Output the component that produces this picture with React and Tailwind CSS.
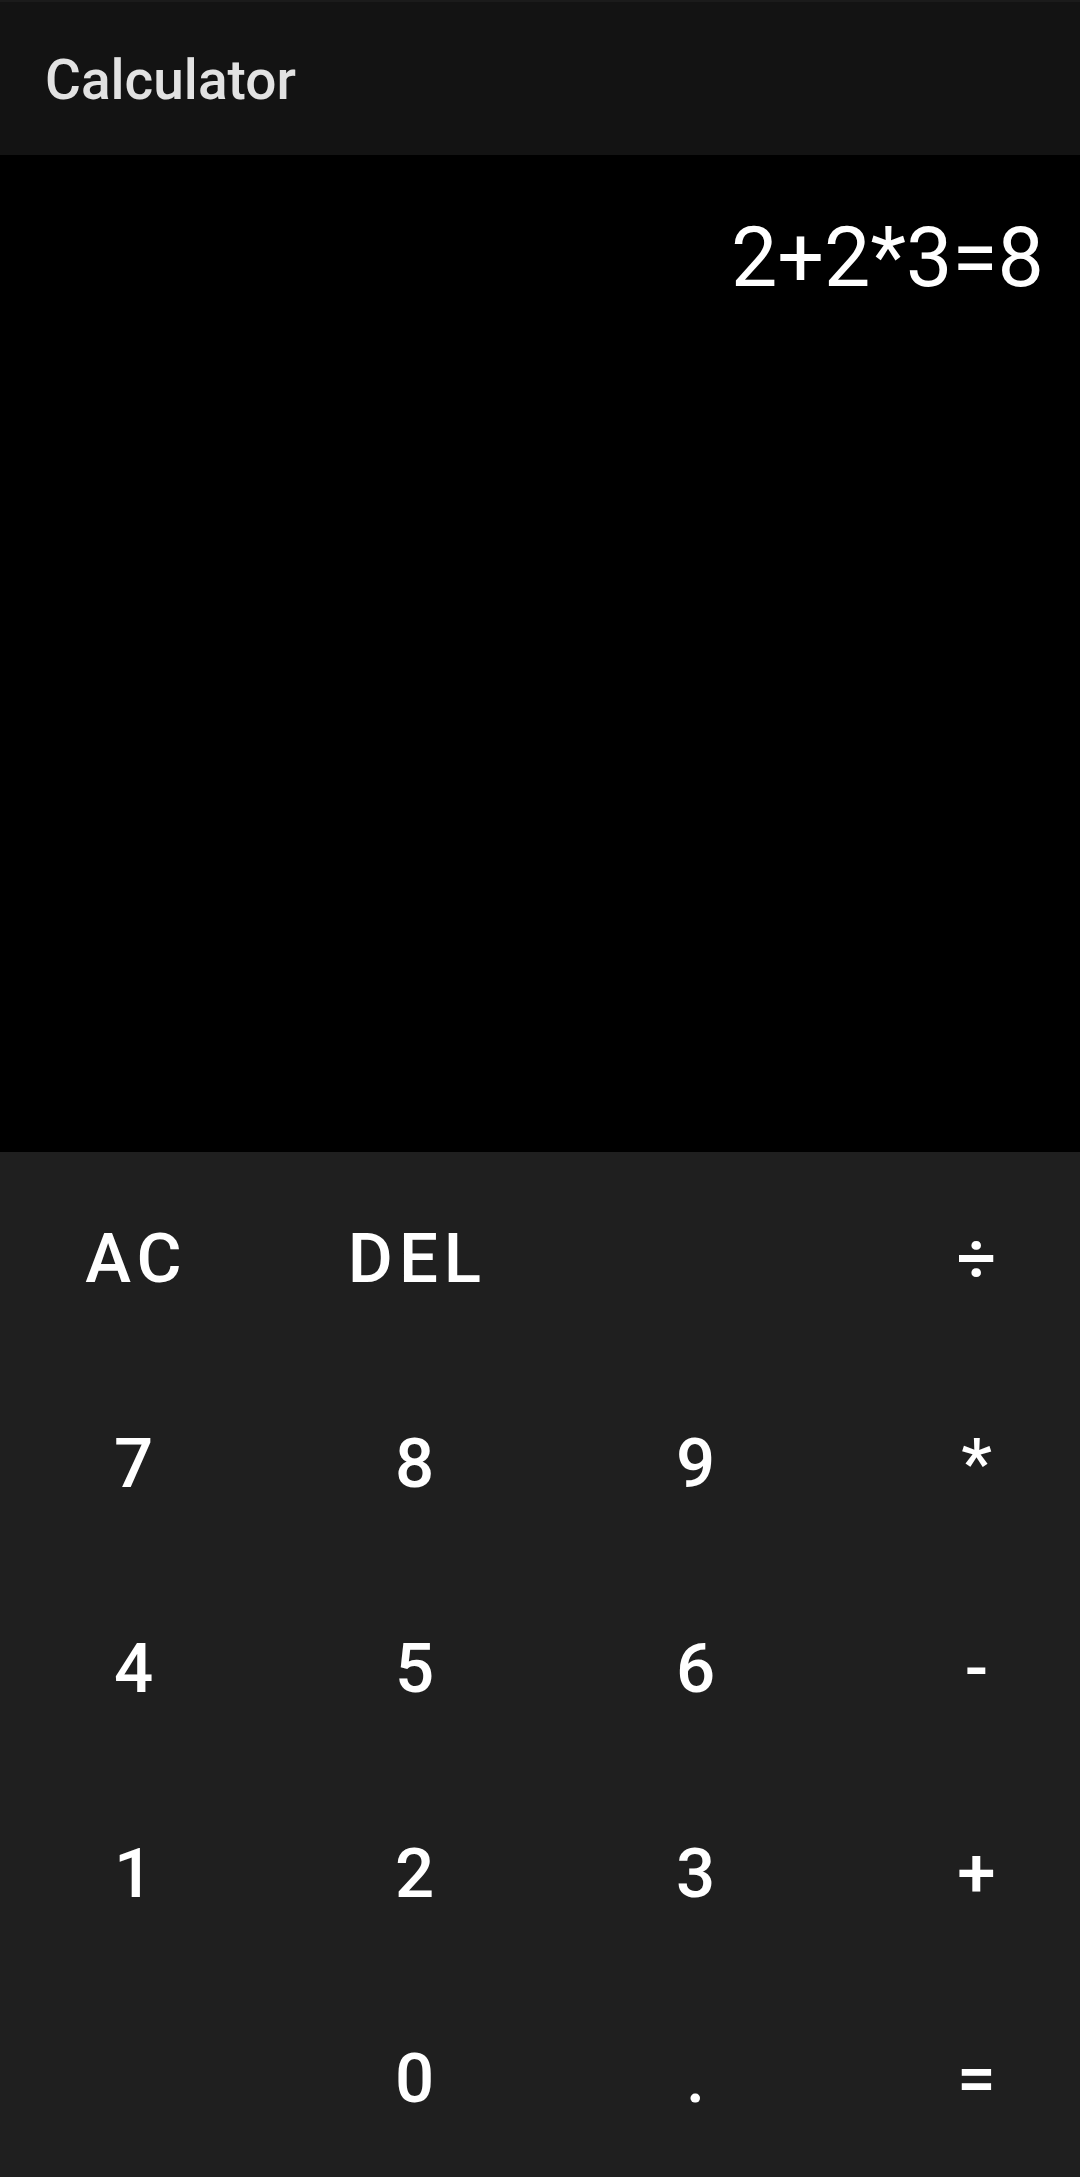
const keys = [
  ['AC', 'DEL', '', '÷'],
  ['7', '8', '9', '*'],
  ['4', '5', '6', '-'],
  ['1', '2', '3', '+'],
  ['', '0', '.', '='],
];

export default function App() {
  return (
    <div className="flex h-[2177px] w-[1080px] flex-col overflow-hidden bg-black font-['Roboto',sans-serif]">
      <header className="flex h-[155px] shrink-0 items-center border-t-2 border-[#1b1b1b] bg-[#131313] pl-[45px] pt-[4px]">
        <h1 className="text-[55px] font-medium leading-normal text-[#e2e2e2]">Calculator</h1>
      </header>

      <div className="flex h-[997px] shrink-0 justify-end bg-black pr-[36px] pt-[41px]">
        <p className="text-[82.5px] font-normal leading-normal text-white">2+2*3=8</p>
      </div>

      <div className="flex-1 overflow-hidden bg-[#1f1f1f]">
        <div className="ml-[-4px] grid w-[1124px] grid-cols-[repeat(4,281px)]">
          {keys.flat().map((k, i) => (
            <button
              key={i}
              className="flex h-[205px] items-center justify-center pt-[8px] text-[69px] font-medium leading-normal tracking-[6px] text-white"
            >
              {k}
            </button>
          ))}
        </div>
      </div>
    </div>
  );
}
